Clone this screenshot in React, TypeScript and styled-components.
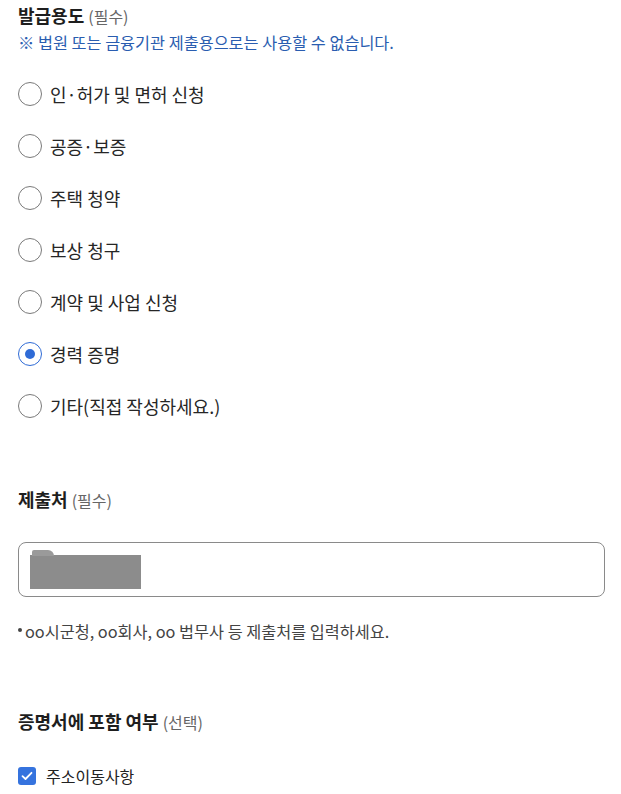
import React, { useState } from "react";
import styled, { createGlobalStyle } from "styled-components";

const GlobalStyle = createGlobalStyle`
  html, body {
    margin: 0;
    padding: 0;
    background: #ffffff;
    font-family: "Noto Sans CJK KR", "Noto Sans", sans-serif;
    color: #222222;
  }
  * { box-sizing: border-box; }
`;

const Page = styled.div`
  width: 621px;
  padding: 3px 16px 0 18px;
  display: flex;
  flex-direction: column;
`;

const Section = styled.section<{ $gapTop?: number }>`
  display: flex;
  flex-direction: column;
  margin-top: ${(p) => p.$gapTop ?? 0}px;
`;

const Heading = styled.h2`
  margin: 0;
  font-size: 18px;
  line-height: 24px;
  font-weight: 700;
  letter-spacing: 0;
  color: #1e1e1e;
`;

const Sub = styled.span`
  font-size: 16px;
  font-weight: 400;
  color: #666666;
  margin-left: 4px;
`;

const Notice = styled.p`
  margin: 3px 0 0;
  font-size: 16.3px;
  line-height: 22px;
  color: #2a5db0;
`;

const RadioList = styled.div`
  display: flex;
  flex-direction: column;
  margin-top: 15px;
`;

const RadioRow = styled.label`
  display: flex;
  align-items: center;
  height: 52px;
  gap: 8px;
  cursor: pointer;
`;

const RadioCircle = styled.span<{ $checked: boolean }>`
  width: 24px;
  height: 24px;
  border-radius: 50%;
  border: ${(p) => (p.$checked ? "1.5px solid #2f6bd6" : "1px solid #7a7a7a")};
  display: flex;
  align-items: center;
  justify-content: center;
  flex-shrink: 0;
  &::after {
    content: "";
    width: 10px;
    height: 10px;
    border-radius: 50%;
    background: #2f6bd6;
    display: ${(p) => (p.$checked ? "block" : "none")};
  }
`;

const RadioText = styled.span`
  font-size: 18px;
  line-height: 24px;
  color: #262626;
`;

const InputBox = styled.div`
  margin-top: 30px;
  height: 55px;
  width: 587px;
  border: 1px solid #8a8a8a;
  border-radius: 8px;
  display: flex;
  align-items: center;
  padding-left: 11px;
`;

const Redaction = styled.div`
  position: relative;
  width: 111px;
  height: 34px;
  background: #8c8c8c;
  filter: blur(0.6px);
  margin-top: 4px;
  &::before {
    content: "";
    position: absolute;
    left: 2px;
    top: -5px;
    width: 22px;
    height: 6px;
    background: #9a9a9a;
    border-radius: 2px 6px 0 0;
  }
`;

const Hint = styled.p`
  margin: 23px 0 0;
  font-size: 16.3px;
  line-height: 22px;
  color: #444444;
  display: flex;
  align-items: center;
  &::before {
    content: "";
    width: 4px;
    height: 4px;
    border-radius: 50%;
    background: #444444;
    margin-right: 3px;
    margin-top: -3px;
  }
`;

const CheckRow = styled.label`
  display: flex;
  align-items: center;
  gap: 10px;
  margin-top: 30px;
  height: 24px;
`;

const CheckBox = styled.span`
  width: 18px;
  height: 18px;
  border-radius: 3px;
  background: #3573de;
  display: flex;
  align-items: center;
  justify-content: center;
  flex-shrink: 0;
`;

const CheckText = styled.span`
  font-size: 16px;
  line-height: 22px;
  color: #222222;
`;

const options = [
  "인·허가 및 면허 신청",
  "공증·보증",
  "주택 청약",
  "보상 청구",
  "계약 및 사업 신청",
  "경력 증명",
  "기타(직접 작성하세요.)",
];

export default function App() {
  const [selected, setSelected] = useState(5);
  return (
    <>
      <GlobalStyle />
      <Page>
        <Section>
          <Heading>
            발급용도<Sub>(필수)</Sub>
          </Heading>
          <Notice>※ 법원 또는 금융기관 제출용으로는 사용할 수 없습니다.</Notice>
          <RadioList>
            {options.map((o, i) => (
              <RadioRow key={o} onClick={() => setSelected(i)}>
                <RadioCircle $checked={selected === i} />
                <RadioText>{o}</RadioText>
              </RadioRow>
            ))}
          </RadioList>
        </Section>
        <Section $gapTop={55}>
          <Heading>
            제출처<Sub>(필수)</Sub>
          </Heading>
          <InputBox>
            <Redaction />
          </InputBox>
          <Hint>oo시군청, oo회사, oo 법무사 등 제출처를 입력하세요.</Hint>
        </Section>
        <Section $gapTop={67}>
          <Heading>
            증명서에 포함 여부<Sub>(선택)</Sub>
          </Heading>
          <CheckRow>
            <CheckBox>
              <svg width="12" height="10" viewBox="0 0 12 10" fill="none">
                <path d="M1.5 5.2 L4.5 8 L10.5 1.8" stroke="#ffffff" strokeWidth="1.8" strokeLinecap="round" strokeLinejoin="round" />
              </svg>
            </CheckBox>
            <CheckText>주소이동사항</CheckText>
          </CheckRow>
        </Section>
      </Page>
    </>
  );
}
